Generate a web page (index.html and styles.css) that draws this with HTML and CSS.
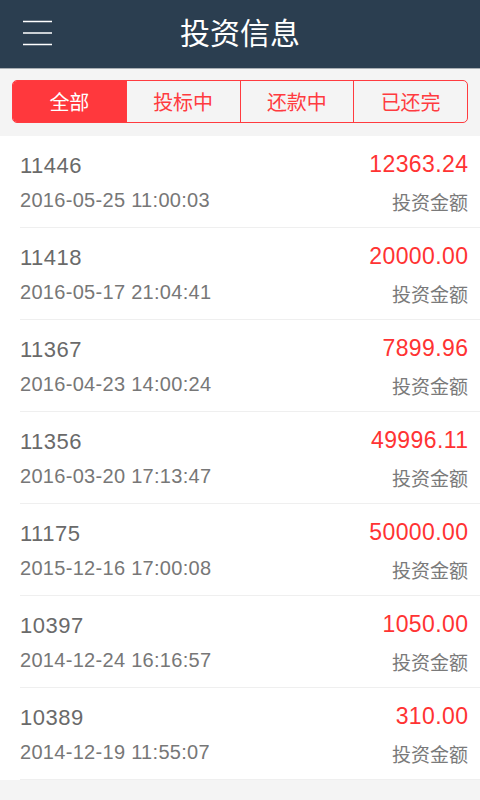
FILE: index.html
```html
<!DOCTYPE html>
<html lang="zh-CN">
<head>
<meta charset="utf-8">
<title>投资信息</title>
<link rel="stylesheet" href="styles.css">
</head>
<body>
<header class="topbar">
  <button class="menu" aria-label="菜单">
    <svg width="30" height="26" viewBox="0 0 30 26">
      <path d="M0 1.5H29M0 13H29M0 24.5H29" stroke="#ffffff" stroke-width="1.6" fill="none"/>
    </svg>
  </button>
  <h1 class="title">投资信息</h1>
</header>

<nav class="tabs">
  <div class="tab active">全部</div>
  <div class="tab">投标中</div>
  <div class="tab">还款中</div>
  <div class="tab">已还完</div>
</nav>

<ul class="list">
  <li class="row">
    <div class="left"><div class="id">11446</div><div class="date">2016-05-25 11:00:03</div></div>
    <div class="right"><div class="amount">12363.24</div><div class="label">投资金额</div></div>
  </li>
  <li class="row">
    <div class="left"><div class="id">11418</div><div class="date">2016-05-17 21:04:41</div></div>
    <div class="right"><div class="amount">20000.00</div><div class="label">投资金额</div></div>
  </li>
  <li class="row">
    <div class="left"><div class="id">11367</div><div class="date">2016-04-23 14:00:24</div></div>
    <div class="right"><div class="amount">7899.96</div><div class="label">投资金额</div></div>
  </li>
  <li class="row">
    <div class="left"><div class="id">11356</div><div class="date">2016-03-20 17:13:47</div></div>
    <div class="right"><div class="amount">49996.11</div><div class="label">投资金额</div></div>
  </li>
  <li class="row">
    <div class="left"><div class="id">11175</div><div class="date">2015-12-16 17:00:08</div></div>
    <div class="right"><div class="amount">50000.00</div><div class="label">投资金额</div></div>
  </li>
  <li class="row">
    <div class="left"><div class="id">10397</div><div class="date">2014-12-24 16:16:57</div></div>
    <div class="right"><div class="amount">1050.00</div><div class="label">投资金额</div></div>
  </li>
  <li class="row">
    <div class="left"><div class="id">10389</div><div class="date">2014-12-19 11:55:07</div></div>
    <div class="right"><div class="amount">310.00</div><div class="label">投资金额</div></div>
  </li>
</ul>
</body>
</html>
```

FILE: styles.css
```css
* { box-sizing: border-box; }
html, body {
  margin: 0;
  padding: 0;
  background: #f4f4f4;
  font-family: "Liberation Sans", "Noto Sans CJK SC", sans-serif;
}
.topbar {
  position: relative;
  height: 69px;
  background: #2b3e50;
  border-bottom: 1px solid #a9aeb3;
  display: flex;
  align-items: center;
  justify-content: center;
}
.menu {
  position: absolute;
  left: 23px;
  top: 20px;
  padding: 0;
  margin: 0;
  border: 0;
  background: none;
  display: block;
  line-height: 0;
}
.title {
  margin: 0;
  font-size: 30px;
  font-weight: normal;
  line-height: 68px;
  color: #ffffff;
}
.tabs {
  display: flex;
  margin: 11px 12px 0 12px;
  height: 43px;
  border: 1px solid #ff3b3f;
  border-radius: 5px;
  overflow: hidden;
}
.tab {
  flex: 1;
  display: flex;
  align-items: center;
  justify-content: center;
  font-size: 20px;
  color: #ff3b3f;
  border-left: 1px solid #ff3b3f;
}
.tab:first-child { border-left: 0; }
.tab.active {
  background: #ff383d;
  color: #ffffff;
}
.list {
  list-style: none;
  margin: 13px 0 0 0;
  padding: 0 0 0 20px;
  background: #ffffff;
}
.row {
  display: flex;
  justify-content: space-between;
  height: 92px;
  padding: 15px 12px 0 0;
  border-bottom: 1px solid #efefef;
}
.left, .right { display: flex; flex-direction: column; }
.right { align-items: flex-end; }
.id {
  font-size: 22px;
  line-height: 30px;
  letter-spacing: 0.5px;
  color: #6a6a6a;
}
.date {
  margin-top: 4px;
  font-size: 20px;
  line-height: 30px;
  letter-spacing: 0.3px;
  color: #777777;
}
.amount {
  font-size: 23px;
  line-height: 26px;
  letter-spacing: 0.4px;
  margin-right: -0.4px;
  color: #ff3333;
}
.label {
  margin-top: 12px;
  font-size: 19px;
  line-height: 30px;
  color: #7a7a7a;
}
```
